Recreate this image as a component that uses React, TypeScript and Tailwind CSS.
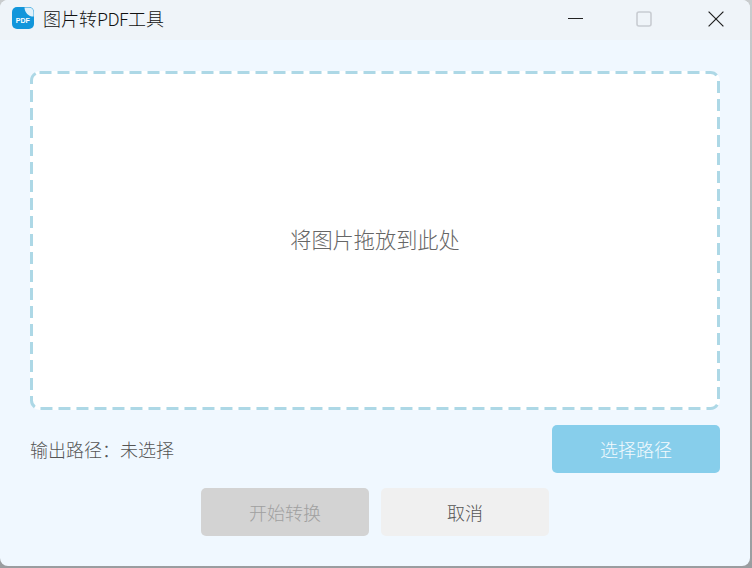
const cjk = "font-['Microsoft_YaHei','Noto_Sans_CJK_SC',sans-serif]";

function WindowIcon() {
  return (
    <svg width="22" height="22" viewBox="0 0 22 22" className="shrink-0">
      <rect width="22" height="22" rx="5" fill="#1296db" />
      <path d="M12.5 0.4H17a4.6 4.6 0 0 1 4.6 4.6V9.6C16.6 9.6 12.6 5.4 12.5 0.4Z" fill="#dff0fa" />
      <text x="10.8" y="16.2" textAnchor="middle" fontSize="7" fontWeight="700" fill="#fff" fontFamily="Liberation Sans, sans-serif">
        PDF
      </text>
    </svg>
  );
}

function TitleBar() {
  return (
    <header className="flex h-10 shrink-0 items-center bg-[#eff4f9]">
      <div className="ml-3 mt-[-4px] flex items-center gap-[9px]">
        <WindowIcon />
        <span className="text-[18px] font-light leading-6 text-[#111]">
          图片转<span className="tracking-[-0.6px]">PDF</span>工具
        </span>
      </div>
      <div className="ml-auto mt-[-2px] flex items-center">
        <svg width="16" height="16" viewBox="0 0 16 16" className="mr-[52px]">
          <path d="M0 7.5H15" stroke="#222" strokeWidth="1" fill="none" />
        </svg>
        <svg width="16" height="16" viewBox="0 0 16 16" className="mr-[56px]">
          <rect x="1" y="1" width="14" height="14" rx="2" stroke="#c8ccd2" strokeWidth="1.6" fill="none" />
        </svg>
        <svg width="16" height="16" viewBox="0 0 16 16" className="mr-[26px]">
          <path d="M0.6 0.6L15.4 15.4M15.4 0.6L0.6 15.4" stroke="#222" strokeWidth="1.2" fill="none" />
        </svg>
      </div>
    </header>
  );
}

function DropZone() {
  return (
    <div className="relative flex h-[339px] items-center justify-center rounded-[10px] bg-white">
      {/* the dash rhythm of the reference is longer than css dashed gives */}
      <svg width="690" height="339" className="absolute inset-0">
        <rect
          x="1.5"
          y="1.5"
          width="687"
          height="336"
          rx="8"
          fill="none"
          stroke="#add8e6"
          strokeWidth="3"
          strokeDasharray="12 6"
        />
      </svg>
      <span className="mt-[-3px] text-[21.2px] font-light text-[#666]">将图片拖放到此处</span>
    </div>
  );
}

export default function App() {
  return (
    <div className={`h-[568px] w-[752px] overflow-hidden bg-gradient-to-b from-[#c9ccce] to-[#9a9da0] ${cjk}`}>
      <div className="flex h-[566px] w-[750px] flex-col overflow-hidden rounded-[8px] bg-[#f0f8ff]">
        <TitleBar />
        <main className="flex flex-1 flex-col px-[30px] pt-[31px]">
          <DropZone />
          <div className="mt-[15px] flex items-center justify-between">
            <span className="text-[18px] font-light text-[#555]">输出路径：未选择</span>
            <button className="h-12 w-[168px] rounded-[5px] bg-[#87ceeb] text-[18px] font-light text-white/90">选择路径</button>
          </div>
          <div className="mt-[15px] flex justify-center gap-3">
            <button className="h-12 w-[168px] rounded-[5px] bg-[#d3d3d3] text-[18px] font-light text-[#a0a0a0]">开始转换</button>
            <button className="h-12 w-[168px] rounded-[5px] bg-[#f0f0f0] text-[18px] font-light text-[#555]">取消</button>
          </div>
        </main>
      </div>
    </div>
  );
}
